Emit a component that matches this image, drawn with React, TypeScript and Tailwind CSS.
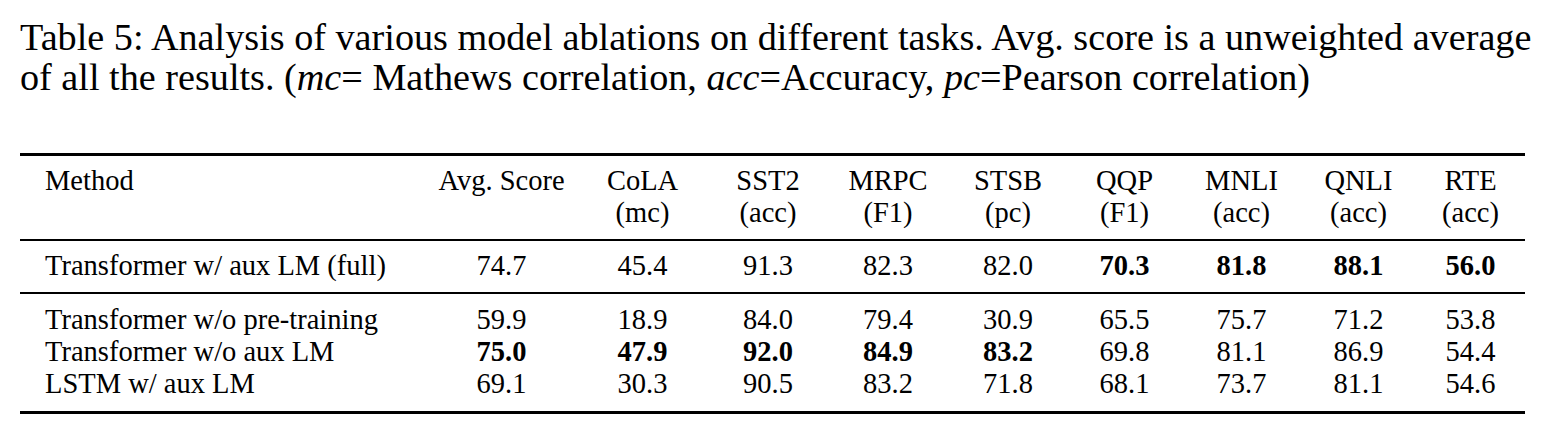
const COLS =
  'grid grid-cols-[407px_149px_133px_118px_122px_118px_115px_119px_115px_109px]';

type Cell = { v: string; b?: boolean };

const header: [string, string][] = [
  ['Avg. Score', ''],
  ['CoLA', '(mc)'],
  ['SST2', '(acc)'],
  ['MRPC', '(F1)'],
  ['STSB', '(pc)'],
  ['QQP', '(F1)'],
  ['MNLI', '(acc)'],
  ['QNLI', '(acc)'],
  ['RTE', '(acc)'],
];

const n = (v: string, b = false): Cell => ({ v, b });

const fullRow: { name: string; cells: Cell[] } = {
  name: 'Transformer w/ aux LM (full)',
  cells: [
    n('74.7'),
    n('45.4'),
    n('91.3'),
    n('82.3'),
    n('82.0'),
    n('70.3', true),
    n('81.8', true),
    n('88.1', true),
    n('56.0', true),
  ],
};

const ablations: { name: string; cells: Cell[] }[] = [
  {
    name: 'Transformer w/o pre-training',
    cells: [n('59.9'), n('18.9'), n('84.0'), n('79.4'), n('30.9'), n('65.5'), n('75.7'), n('71.2'), n('53.8')],
  },
  {
    name: 'Transformer w/o aux LM',
    cells: [
      n('75.0', true),
      n('47.9', true),
      n('92.0', true),
      n('84.9', true),
      n('83.2', true),
      n('69.8'),
      n('81.1'),
      n('86.9'),
      n('54.4'),
    ],
  },
  {
    name: 'LSTM w/ aux LM',
    cells: [n('69.1'), n('30.3'), n('90.5'), n('83.2'), n('71.8'), n('68.1'), n('73.7'), n('81.1'), n('54.6')],
  },
];

function Row({ name, cells }: { name: string; cells: Cell[] }) {
  return (
    <div className={COLS}>
      <div className="pl-[25px] whitespace-nowrap">{name}</div>
      {cells.map((c, i) => (
        <div key={i} className={c.b ? 'text-center font-bold' : 'text-center'}>
          {c.v}
        </div>
      ))}
    </div>
  );
}

export default function App() {
  return (
    <div className="w-[1551px] h-[423px] overflow-hidden bg-white text-black font-['Liberation_Serif','Times_New_Roman',serif]">
      {/* caption */}
      <div className="pl-[20px] pt-[17px] text-[38.2px] leading-[40px] whitespace-nowrap">
        <div>Table 5: Analysis of various model ablations on different tasks. Avg. score is a unweighted average</div>
        <div>
          of all the results. (<i>mc</i>= Mathews correlation, <i>acc</i>=Accuracy, <i>pc</i>=Pearson correlation)
        </div>
      </div>

      {/* table */}
      <div className="ml-[20px] mt-[56px] w-[1505px] border-t-[3px] border-b-[3px] border-black text-[28.5px] leading-[32px]">
        <div className={`${COLS} pt-[9.4px] pb-[9.6px]`}>
          <div className="pl-[25px]">Method</div>
          {header.map(([a, b]) => (
            <div key={a} className="text-center whitespace-nowrap">
              <div>{a}</div>
              <div>{b || '\u00a0'}</div>
            </div>
          ))}
        </div>

        <div className="border-t-2 border-black pt-[9.4px] pb-[10px]">
          <Row {...fullRow} />
        </div>

        <div className="border-t-2 border-black pt-[10px] pb-[11px]">
          {ablations.map((r) => (
            <Row key={r.name} {...r} />
          ))}
        </div>
      </div>
    </div>
  );
}
